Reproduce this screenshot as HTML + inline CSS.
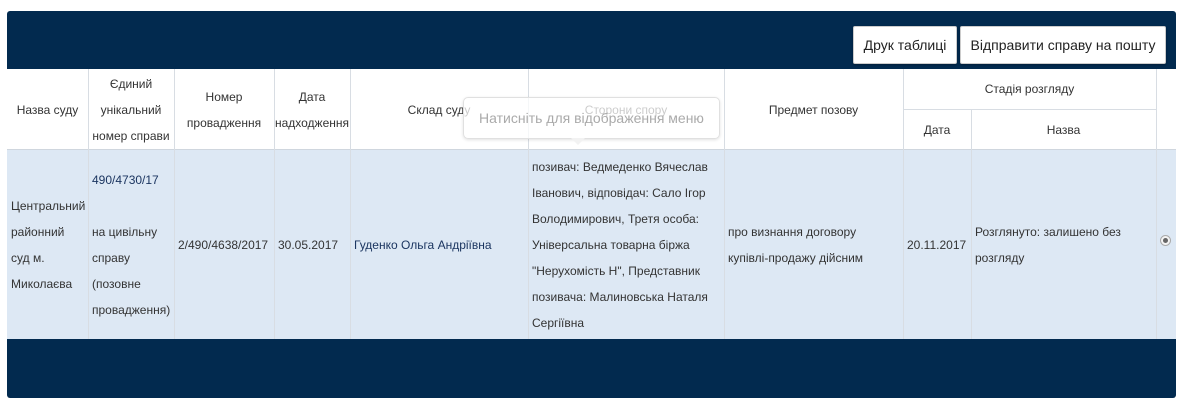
<!DOCTYPE html>
<html><head><meta charset="utf-8"><style>
body{margin:0;width:1185px;height:406px;background:#fff;font-family:"Liberation Sans",Arial,sans-serif;position:relative;overflow:hidden}
.panel{position:absolute;left:7px;top:11px;width:1169px;height:387px;background:#022a4f;border-radius:3px}
.hdr{position:absolute;top:69px;height:81px;background:#fff}
.row{position:absolute;left:7px;top:150px;width:1169px;height:189px;background:#dde8f4}
.c{position:absolute;box-sizing:border-box;display:flex;align-items:center;font-size:12px;color:#333;line-height:26px}
.h{justify-content:center;text-align:center;color:#333}
.v{position:absolute;width:1px;background:#d8dde3}
.btn{position:absolute;top:26px;height:38px;background:#fff;border:1px solid #ccc;border-radius:2px;font-size:14px;color:#222;display:flex;align-items:center;justify-content:center;box-shadow:0 1px 2px rgba(0,0,0,.3);box-sizing:border-box}
a{color:#1b3560;text-decoration:none}
</style></head><body>
<div class="panel"></div>
<div class="btn" style="left:853px;width:104px">Друк таблиці</div>
<div class="btn" style="left:960px;width:206px">Відправити справу на пошту</div>
<div class="hdr" style="left:7px;width:1169px"></div>
<div class="row"></div>
<div style="position:absolute;left:903px;top:109px;width:253px;height:1px;background:#d8dde3"></div>
<div style="position:absolute;left:7px;top:149px;width:1169px;height:1px;background:#cfd6de"></div>
<div class="v" style="left:88px;top:69px;height:270px"></div>
<div class="v" style="left:174px;top:69px;height:270px"></div>
<div class="v" style="left:274px;top:69px;height:270px"></div>
<div class="v" style="left:350px;top:69px;height:270px"></div>
<div class="v" style="left:528px;top:69px;height:270px"></div>
<div class="v" style="left:724px;top:69px;height:270px"></div>
<div class="v" style="left:903px;top:69px;height:270px"></div>
<div class="v" style="left:971px;top:109px;height:230px"></div>
<div class="v" style="left:1156px;top:69px;height:270px"></div>

<div class="c h" style="left:7px;top:69px;width:81px;height:81px">Назва суду</div>
<div class="c h" style="left:88px;top:69px;width:86px;height:81px">Єдиний<br>унікальний<br>номер справи</div>
<div class="c h" style="left:174px;top:69px;width:100px;height:81px">Номер<br>провадження</div>
<div class="c h" style="left:274px;top:69px;width:76px;height:81px">Дата<br>надходження</div>
<div class="c h" style="left:350px;top:69px;width:178px;height:81px">Склад суду</div>
<div class="c h" style="left:528px;top:69px;width:196px;height:81px">Сторони спору</div>
<div class="c h" style="left:724px;top:69px;width:179px;height:81px">Предмет позову</div>
<div class="c h" style="left:903px;top:69px;width:253px;height:40px">Стадія розгляду</div>
<div class="c h" style="left:903px;top:109px;width:68px;height:41px">Дата</div>
<div class="c h" style="left:971px;top:109px;width:185px;height:41px">Назва</div>

<div class="c" style="left:11px;top:150px;width:77px;height:189px"><div>Центральний<br>районний<br>суд м.<br>Миколаєва</div></div>
<div class="c" style="left:92px;top:150px;width:82px;height:189px"><div><a>490/4730/17</a><br><br>на цивільну справу (позовне провадження)</div></div>
<div class="c" style="left:178px;top:150px;width:96px;height:189px">2/490/4638/2017</div>
<div class="c" style="left:278px;top:150px;width:72px;height:189px">30.05.2017</div>
<div class="c" style="left:354px;top:150px;width:174px;height:189px"><a>Гуденко Ольга Андріївна</a></div>
<div class="c" style="left:532px;top:150px;width:192px;height:189px">позивач: Ведмеденко Вячеслав Іванович, відповідач: Сало Ігор Володимирович, Третя особа: Універсальна товарна біржа "Нерухомість Н", Представник позивача: Малиновська Наталя Сергіївна</div>
<div class="c" style="left:728px;top:150px;width:175px;height:189px"><div>про визнання договору<br>купівлі-продажу дійсним</div></div>
<div class="c" style="left:907px;top:150px;width:64px;height:189px">20.11.2017</div>
<div class="c" style="left:975px;top:150px;width:181px;height:189px">Розглянуто: залишено без розгляду</div>
<div style="position:absolute;left:1160px;top:235px;width:9px;height:9px;border:1px solid #aaa;border-radius:50%;background:#f4f4f4"><div style="position:absolute;left:2px;top:2px;width:5px;height:5px;border-radius:50%;background:#666"></div></div>

<div style="position:absolute;left:463px;top:97px;width:255px;height:40px;background:rgba(255,255,255,.75);border:1px solid #e0e0e0;border-radius:5px;box-shadow:0 1px 3px rgba(0,0,0,.12);font-size:14px;color:#aaa;display:flex;align-items:center;justify-content:center">Натисніть для відображення меню</div>
<div style="position:absolute;left:571px;top:138px;width:0;height:0;border-left:7px solid transparent;border-right:7px solid transparent;border-top:7px solid #f2f2f2"></div>
</body></html>
